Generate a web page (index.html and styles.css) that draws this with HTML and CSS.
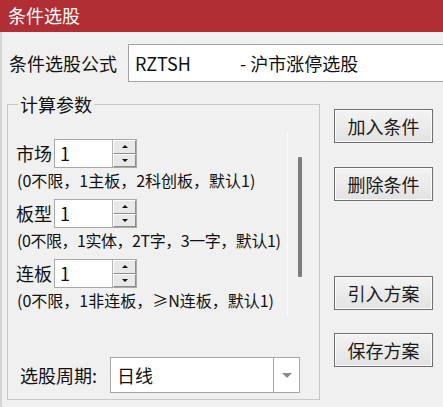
FILE: index.html
```html
<!DOCTYPE html>
<html lang="zh-CN">
<head>
<meta charset="utf-8">
<link rel="stylesheet" href="styles.css">
</head>
<body>
<div class="window">
  <div class="titlebar">条件选股</div>
  <div class="client">
    <div class="formula-row">
      <span class="formula-label">条件选股公式</span>
      <div class="formula-input"><span class="code">RZTSH</span><span>- 沪市涨停选股</span></div>
    </div>
    <div class="main">
      <div class="group">
        <div class="group-title">计算参数</div>
        <div class="panel">
          <div class="panel-body">
            <div class="param">
              <div class="param-line">
                <span class="param-label">市场</span>
                <div class="spin"><span class="spin-edit">1</span><div class="spin-btns"><span class="up"><i></i></span><span class="down"><i></i></span></div></div>
              </div>
              <div class="desc">(0不限，1主板，2科创板，默认1)</div>
            </div>
            <div class="param">
              <div class="param-line">
                <span class="param-label">板型</span>
                <div class="spin"><span class="spin-edit">1</span><div class="spin-btns"><span class="up"><i></i></span><span class="down"><i></i></span></div></div>
              </div>
              <div class="desc tight">(0不限，1实体，2T字，3一字，默认1)</div>
            </div>
            <div class="param">
              <div class="param-line">
                <span class="param-label">连板</span>
                <div class="spin"><span class="spin-edit">1</span><div class="spin-btns"><span class="up"><i></i></span><span class="down"><i></i></span></div></div>
              </div>
              <div class="desc">(0不限，1非连板，≥N连板，默认1)</div>
            </div>
          </div>
          <div class="scroll"><div class="thumb"></div></div>
        </div>
        <div class="period-row">
          <span class="period-label">选股周期:</span>
          <div class="combo"><span class="combo-text">日线</span><span class="combo-btn"><i></i></span></div>
        </div>
      </div>
      <div class="buttons">
        <button class="btn b1">加入条件</button>
        <button class="btn b2">删除条件</button>
        <button class="btn b3">引入方案</button>
        <button class="btn b4">保存方案</button>
      </div>
    </div>
  </div>
</div>
</body>
</html>
```
FILE: styles.css
```css
* { box-sizing: border-box; }
html, body { margin: 0; padding: 0; }
body {
  width: 443px;
  height: 407px;
  overflow: hidden;
  background: #f0f0f0;
  font-family: "Noto Sans CJK SC", "Noto Sans", sans-serif;
  color: #111;
}
.window { width: 443px; height: 407px; display: flex; flex-direction: column; }
.titlebar {
  height: 32px;
  background: #b22e35;
  color: #fff;
  font-size: 18px;
  line-height: 31px;
  padding-left: 8px;
}
.client {
  flex: 1;
  border-left: 2px solid #d6d6d6;
  background: #f0f0f0;
  overflow: hidden;
}
.formula-row {
  display: flex;
  align-items: center;
  padding-top: 12px;
  padding-left: 7px;
  height: 50px;
}
.formula-label { font-size: 18px; width: 119px; flex: 0 0 119px; line-height: 38px; }
.formula-input {
  flex: 0 0 340px;
  height: 38px;
  background: #fff;
  border: 1px solid #a3a3a3;
  font-size: 18px;
  line-height: 36px;
  padding-left: 6px;
  white-space: nowrap;
}
.formula-input .code { display: inline-block; width: 105px; }
.main { display: flex; align-items: flex-start; margin-top: 22px; }
.group {
  margin-left: 5px;
  width: 313px;
  border: 1px solid #c8c8c8;
  padding-bottom: 6px;
}
.group-title {
  width: fit-content;
  margin: -12px 0 0 10px;
  padding: 0 2px;
  background: #f0f0f0;
  font-size: 18px;
  line-height: 22px;
  height: 22px;
}
.panel { display: flex; margin-top: 17px; height: 185px; }
.panel-body {
  width: 280px;
  border-right: 1px solid #fbfbfb;
  padding: 7px 0 0 8px;
}
.param { height: 60px; }
.param-line { display: flex; align-items: center; height: 29px; }
.param-label { font-size: 18px; width: 36px; margin-right: 2px; line-height: 29px; }
.spin {
  display: flex;
  width: 83px;
  height: 29px;
  border: 1px solid #a9a9a9;
  background: #fff;
}
.spin-edit { flex: 1; font-size: 18px; line-height: 27px; padding-left: 5px; }
.spin-btns { width: 24px; display: flex; flex-direction: column; border-left: 1px solid #b5b5b5; }
.spin-btns span {
  flex: 1;
  background: #e8e8e8;
  border: 1px solid;
  border-color: #fdfdfd #8d8d8d #8d8d8d #fdfdfd;
  display: flex;
  align-items: center;
  justify-content: center;
}
.spin-btns i { display: block; width: 0; height: 0; border-left: 3px solid transparent; border-right: 3px solid transparent; }
.spin-btns .up i { border-bottom: 3px solid #111; }
.spin-btns .down i { border-top: 3px solid #111; }
.desc {
  font-size: 16px;
  line-height: 22px;
  margin-top: 1px;
  margin-left: 1px;
  white-space: nowrap;
  color: #111;
}
.desc.tight { letter-spacing: -0.45px; }
.scroll { margin-left: 10px; width: 4px; }
.thumb { margin-top: 25px; height: 120px; width: 4px; background: #7c7c7c; border-radius: 1px; }
.period-row { display: flex; align-items: center; margin-top: 40px; padding-left: 12px; height: 36px; }
.period-label { font-size: 18px; width: 90px; }
.combo {
  display: flex;
  width: 190px;
  height: 36px;
  background: #fff;
  border: 1px solid #a6a6a6;
}
.combo-text { flex: 1; font-size: 18px; line-height: 34px; padding-left: 6px; }
.combo-btn {
  width: 26px;
  border-left: 1px solid #a6a6a6;
  display: flex;
  align-items: center;
  justify-content: center;
}
.combo-btn i { display: block; width: 0; height: 0; border-left: 5px solid transparent; border-right: 5px solid transparent; border-top: 5px solid #8a8a8a; }
.buttons { display: flex; flex-direction: column; margin-left: 14px; padding-top: 5px; }
.btn {
  width: 99px;
  height: 34px;
  padding: 0;
  border: 1px solid #6e6e6e;
  box-shadow: inset 0 0 0 1px #fbfbfb;
  background: linear-gradient(#f3f3f3, #e2e2e2);
  font-family: "Noto Sans CJK SC", sans-serif;
  font-size: 18px;
  color: #1a1a1a;
  line-height: 30px;
}
.b2 { margin-top: 24px; }
.b3 { margin-top: 75px; }
.b4 { margin-top: 23px; }
```
